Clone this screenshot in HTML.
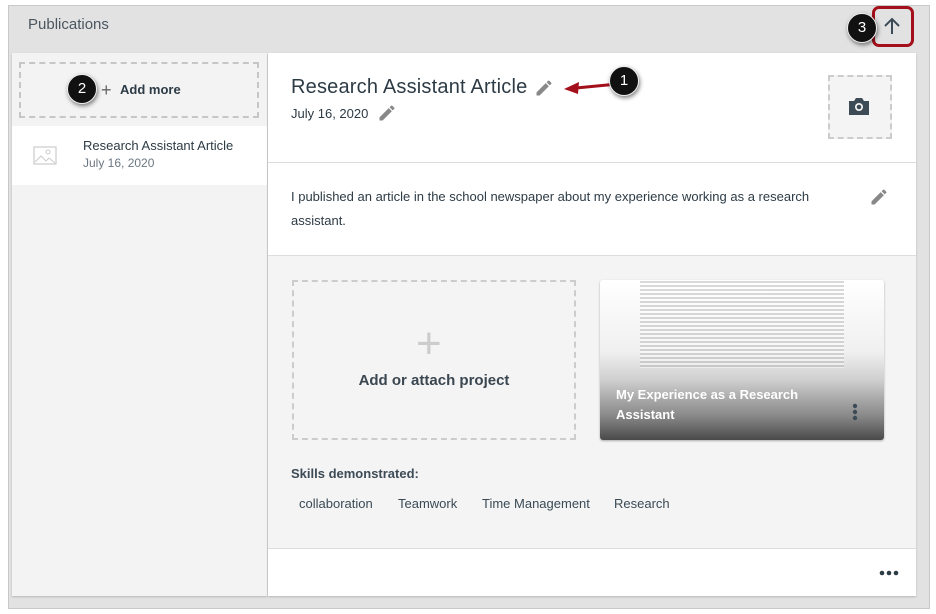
<!DOCTYPE html>
<html><head><style>
*{box-sizing:border-box;margin:0;padding:0}
body{width:936px;height:614px;background:#fff;font-family:"Liberation Sans",sans-serif;color:#2d3b45;position:relative;overflow:hidden}
.abs{position:absolute}
.outer{left:8px;top:5px;width:922px;height:604px;background:#e2e2e2;border:1px solid #c8c8c8}
.left{left:12px;top:53px;width:255px;height:543px;background:#f3f3f3;box-shadow:0 1px 2px rgba(0,0,0,.2)}
.right{left:268px;top:53px;width:648px;height:543px;background:#fff;box-shadow:0 1px 2px rgba(0,0,0,.2)}
.badge{width:30px;height:30px;border-radius:50%;background:#111;color:#fff;font-size:15px;text-align:center;line-height:28px;box-shadow:1px 2px 4px rgba(0,0,0,.5);border:1.5px solid #eee}
.pill{font-size:13px;color:#3a4a55}
</style></head><body>
<div class="abs outer"></div>
<div class="abs" style="left:28px;top:16px;font-size:15px;color:#4a5660">Publications</div>
<div class="abs" style="left:872px;top:6px;width:42px;height:41px;border:3px solid #a3101b;border-radius:7px"></div>
<svg class="abs" style="left:881px;top:15px" width="22" height="22" viewBox="0 0 22 22"><path d="M11 19V4M4 11l7-7 7 7" stroke="#3d4b56" stroke-width="2" fill="none"/></svg>
<div class="abs badge" style="left:847px;top:13px">3</div>

<div class="abs left"></div>
<div class="abs" style="left:19px;top:62px;width:240px;height:56px;border:2px dashed #c6c6c6;background:#f3f3f3"></div>
<div class="abs" style="left:101px;top:80px;font-size:18px;color:#666">+</div>
<div class="abs" style="left:120px;top:82px;font-size:13px;font-weight:bold;color:#2d3b45">Add more</div>
<div class="abs badge" style="left:67px;top:74px">2</div>
<div class="abs" style="left:12px;top:126px;width:255px;height:59px;background:#fff"></div>
<svg class="abs" style="left:33px;top:146px" width="24" height="19" viewBox="0 0 24 19"><rect x="1" y="1" width="22" height="17" fill="none" stroke="#ccc" stroke-width="1.2"/><path d="M2 16l6-6 5 5 3-3 6 5" stroke="#ccc" fill="none"/><circle cx="15" cy="6" r="2" fill="none" stroke="#ccc"/></svg>
<div class="abs" style="left:83px;top:138px;font-size:13px;color:#2d3b45">Research Assistant Article</div>
<div class="abs" style="left:83px;top:156px;font-size:12px;color:#6b7780">July 16, 2020</div>

<div class="abs right"></div>
<div class="abs" style="left:291px;top:76px;font-size:20px;color:#2d3b45;letter-spacing:0.2px">Research Assistant Article</div>
<svg class="abs" style="left:534px;top:78px" width="20" height="20" viewBox="0 0 24 24"><path d="M3 17.25V21h3.75L17.81 9.94l-3.75-3.75L3 17.25zM20.71 7.04a1 1 0 000-1.41l-2.34-2.34a1 1 0 00-1.41 0l-1.83 1.83 3.75 3.75 1.83-1.83z" fill="#888"/></svg>
<svg class="abs" style="left:562px;top:78px" width="70" height="16"><path d="M66 5L14 10" stroke="#a3101b" stroke-width="3"/><path d="M2 11l15-7-1 12z" fill="#a3101b"/></svg>
<div class="abs badge" style="left:609px;top:66px">1</div>
<div class="abs" style="left:291px;top:106px;font-size:13px;color:#2d3b45">July 16, 2020</div>
<svg class="abs" style="left:377px;top:103px" width="20" height="20" viewBox="0 0 24 24"><path d="M3 17.25V21h3.75L17.81 9.94l-3.75-3.75L3 17.25zM20.71 7.04a1 1 0 000-1.41l-2.34-2.34a1 1 0 00-1.41 0l-1.83 1.83 3.75 3.75 1.83-1.83z" fill="#888"/></svg>
<div class="abs" style="left:828px;top:75px;width:64px;height:64px;border:2px dashed #ccc;background:#f4f4f4"></div>
<svg class="abs" style="left:848px;top:96px" width="22" height="20" viewBox="0 0 22 20"><path d="M1 5h5l2-3h6l2 3h5v14H1z" fill="#3d4b56"/><circle cx="11" cy="11" r="4" fill="#f4f4f4"/><circle cx="11" cy="11" r="2.3" fill="#3d4b56"/></svg>
<div class="abs" style="left:268px;top:162px;width:648px;height:1px;background:#ddd"></div>
<div class="abs" style="left:291px;top:185px;width:550px;font-size:13px;line-height:24px;color:#2d3b45">I published an article in the school newspaper about my experience working as a research assistant.</div>
<svg class="abs" style="left:869px;top:187px" width="20" height="20" viewBox="0 0 24 24"><path d="M3 17.25V21h3.75L17.81 9.94l-3.75-3.75L3 17.25zM20.71 7.04a1 1 0 000-1.41l-2.34-2.34a1 1 0 00-1.41 0l-1.83 1.83 3.75 3.75 1.83-1.83z" fill="#888"/></svg>
<div class="abs" style="left:268px;top:255px;width:648px;height:294px;background:#f4f4f4;border-top:1px solid #ddd;border-bottom:1px solid #ddd"></div>
<div class="abs" style="left:292px;top:280px;width:284px;height:160px;border:2px dashed #ccc"></div>
<div class="abs" style="left:416px;top:322px;font-size:44px;font-weight:300;color:#ccc;line-height:44px">+</div>
<div class="abs" style="left:292px;top:372px;width:284px;text-align:center;font-size:15px;font-weight:bold;color:#3a4650">Add or attach project</div>
<div class="abs" style="left:600px;top:280px;width:284px;height:160px;border-radius:3px;background:linear-gradient(#fff 0%,#f0f0f0 45%,#d0d0d0 62%,#888 85%,#4a4a4a 100%);overflow:hidden;box-shadow:0 1px 2px rgba(0,0,0,.3)">
<div style="margin:0 40px;height:88px;background:repeating-linear-gradient(#fff 0 1px,#aaa 1px 3px,#fff 3px 4px);opacity:.45"></div>
</div>
<div class="abs" style="left:616px;top:385px;font-size:13px;line-height:20px;color:#fff;font-weight:bold;width:200px">My Experience as a Research Assistant</div>
<svg class="abs" style="left:852px;top:403px" width="6" height="18"><circle cx="3" cy="3" r="2.2" fill="#3d4b56"/><circle cx="3" cy="9" r="2.2" fill="#3d4b56"/><circle cx="3" cy="15" r="2.2" fill="#3d4b56"/></svg>
<div class="abs" style="left:291px;top:466px;font-size:13px;font-weight:bold;color:#3d4b56">Skills demonstrated:</div>
<div class="abs pill" style="left:299px;top:496px">collaboration</div>
<div class="abs pill" style="left:398px;top:496px">Teamwork</div>
<div class="abs pill" style="left:482px;top:496px">Time Management</div>
<div class="abs pill" style="left:614px;top:496px">Research</div>
<svg class="abs" style="left:879px;top:570px" width="20" height="6"><circle cx="3" cy="3" r="2.3" fill="#2d3b45"/><circle cx="10" cy="3" r="2.3" fill="#2d3b45"/><circle cx="17" cy="3" r="2.3" fill="#2d3b45"/></svg>
</body></html>
